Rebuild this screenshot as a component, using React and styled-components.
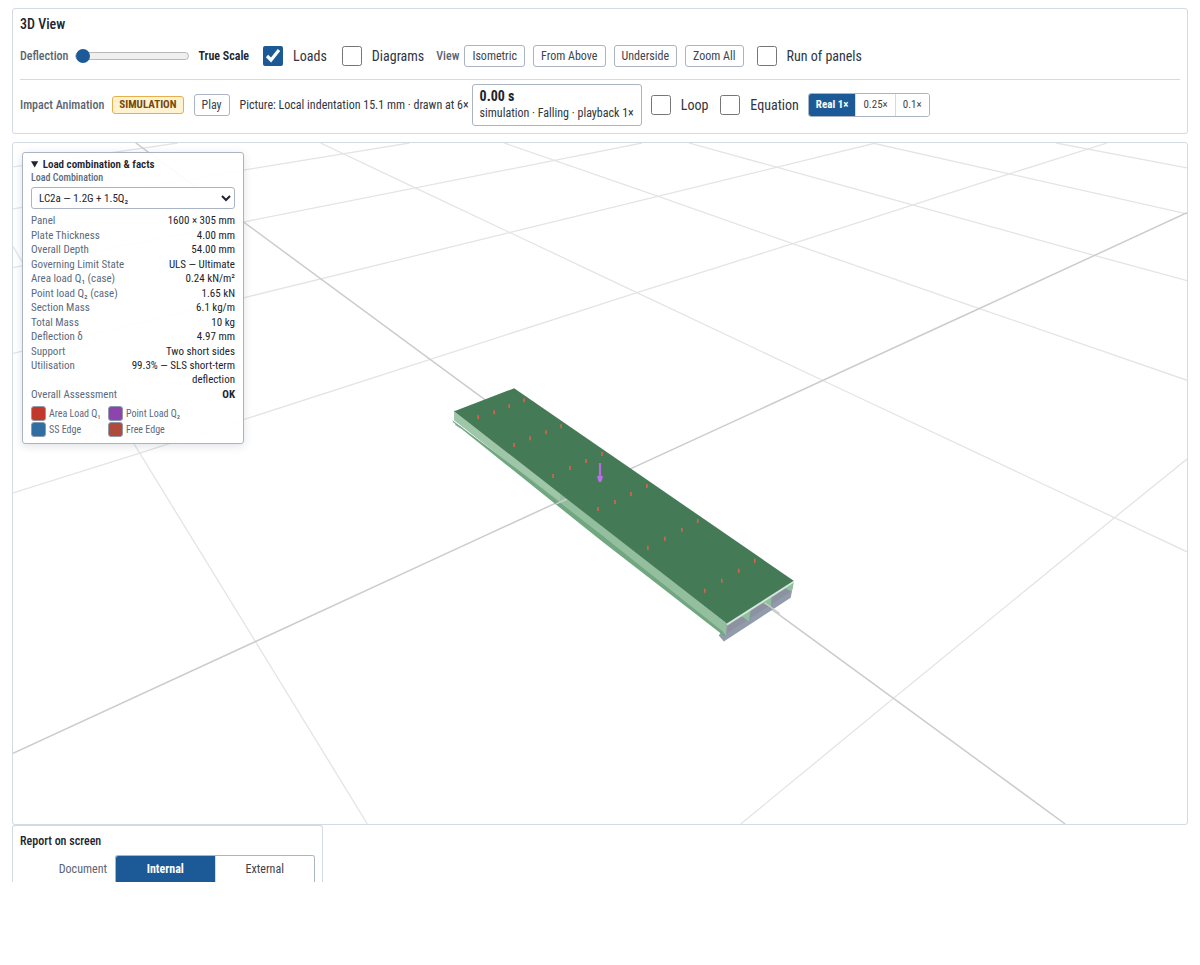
import { useState } from "react";
import styled, { createGlobalStyle } from "styled-components";

const GlobalStyle = createGlobalStyle`
  * {
    box-sizing: border-box;
  }
  body {
    margin: 0;
    background: #fff;
    color: #20242e;
    font-family: "Roboto Condensed", "Liberation Sans Narrow", Roboto, sans-serif;
    font-size: 12px;
    line-height: 16px;
  }
  button, select, input {
    font: inherit;
    color: inherit;
    margin: 0;
  }
`;

const Page = styled.main`
  padding: 8px 12px;
`;

const Card = styled.section`
  border: 1px solid #d3dae3;
  border-radius: 3px;
  background: #fff;
  padding: 7px;
`;

const Toolbar = styled(Card)`
  margin-bottom: 8px;
  padding-bottom: 4px;
`;

const Title = styled.h2`
  margin: 0;
  font-size: 14px;
  line-height: 16px;
  font-weight: 500;
`;

const Row = styled.div`
  display: flex;
  align-items: center;
  min-height: 47px;
`;

const AnimationRow = styled(Row)`
  border-top: 1px solid #d3dae3;
  min-height: 50px;
`;

const Label = styled.label`
  flex: none;
  font-weight: 500;
  color: #5b6472;
  white-space: nowrap;
  margin-right: ${(props) => props.$gap || 8}px;
`;

const Slider = styled.input`
  appearance: none;
  width: 114px;
  height: 16px;
  background: none;
  &::-webkit-slider-runnable-track {
    height: 8px;
    border: 1px solid #b9b9b9;
    border-radius: 4px;
    background: #efefef;
  }
  &::-webkit-slider-thumb {
    appearance: none;
    width: 14px;
    height: 14px;
    margin-top: -4px;
    border-radius: 50%;
    background: #1b5a96;
  }
`;

const ScaleValue = styled.output`
  margin: 0 14px 0 9px;
  font-weight: 600;
  white-space: nowrap;
`;

const Check = styled.label`
  display: flex;
  align-items: center;
  gap: 10px;
  font-size: 14px;
  color: #2f3541;
  white-space: nowrap;
  margin-right: ${(props) => props.$gap || 12}px;
  input {
    width: 20px;
    height: 20px;
    accent-color: #1b5a96;
  }
`;

const Buttons = styled.div`
  display: flex;
  gap: 8px;
  margin-right: 13px;
`;

const Button = styled.button`
  height: 22px;
  padding: 0 7px;
  border: 1px solid #aab4c2;
  border-radius: 3px;
  background: #fff;
  color: #3d4450;
  white-space: nowrap;
`;

const Badge = styled.span`
  padding: 0 6px;
  border: 1px solid #e5b04b;
  border-radius: 3px;
  background: #fff2d0;
  color: #74490c;
  font-size: 11px;
  font-weight: 700;
  margin-right: 10px;
`;

const Note = styled.span`
  margin: 0 3px 0 10px;
  color: #2f3541;
  white-space: nowrap;
`;

const Readout = styled.output`
  display: flex;
  flex-direction: column;
  padding: 3px 7px;
  border: 1px solid #aab4c2;
  border-radius: 3px;
  line-height: 17px;
  color: #2f3541;
  white-space: nowrap;
  margin-right: 9px;
  strong {
    font-size: 14px;
    font-weight: 700;
    color: #20242e;
  }
`;

const Segmented = styled.div`
  display: flex;
  height: 24px;
  border: 1px solid #aab4c2;
  border-radius: 3px;
  overflow: hidden;
`;

const Segment = styled.button`
  border: 0;
  border-left: 1px solid #d3dae3;
  padding: 0 7px;
  font-size: 11px;
  background: ${(props) => (props.$active ? "#1b5a96" : "#fff")};
  color: ${(props) => (props.$active ? "#fff" : "#3d4450")};
  font-weight: ${(props) => (props.$active ? 700 : 400)};
  &:first-child {
    border-left: 0;
  }
`;

const Viewport = styled.section`
  position: relative;
  aspect-ratio: 1176 / 683;
  border: 1px solid #d3dae3;
  border-radius: 3px;
  overflow: hidden;
`;

const Canvas = styled.svg`
  display: block;
  width: 100%;
  height: 100%;
`;

const Facts = styled.details`
  position: absolute;
  top: 9px;
  left: 9px;
  width: 222px;
  padding: 5px 8px 6px;
  border: 1px solid #aab4c2;
  border-radius: 3px;
  background: rgba(255, 255, 255, 0.92);
  box-shadow: 0 2px 8px rgba(20, 40, 70, 0.14);
  font-size: 11px;
  line-height: 14px;
  summary {
    font-weight: 600;
    line-height: 13px;
  }
`;

const FieldLabel = styled.label`
  display: block;
  font-size: 10px;
  line-height: 13px;
  font-weight: 500;
  color: #5b6b7e;
`;

const Select = styled.select`
  display: block;
  width: 100%;
  height: 22px;
  margin: 3px 0 5px;
  padding: 0 3px;
  border: 1px solid #aab4c2;
  border-radius: 3px;
  background: #fff;
`;

const FactList = styled.dl`
  display: flex;
  flex-direction: column;
  justify-content: space-between;
  min-height: 188px;
  margin: 0 0 4px;
`;

const Fact = styled.div`
  display: flex;
  justify-content: space-between;
  dt {
    flex: none;
    color: #5b6b7e;
  }
  dd {
    margin: 0;
    max-width: 110px;
    text-align: right;
    font-weight: ${(props) => (props.$strong ? 700 : 400)};
  }
`;

const Legend = styled.ul`
  display: grid;
  grid-template-columns: 77px 1fr;
  row-gap: 1px;
  margin: 0;
  padding: 0;
  list-style: none;
  font-size: 10px;
  color: #5b6b7e;
`;

const LegendItem = styled.li`
  display: flex;
  align-items: center;
  gap: 3px;
  white-space: nowrap;
  &::before {
    content: "";
    width: 13px;
    height: 13px;
    border: 1px solid #8f9bab;
    border-radius: 3px;
    background: ${(props) => props.$color};
  }
`;

const Report = styled(Card)`
  max-width: 311px;
  border-bottom: 0;
  border-radius: 3px 3px 0 0;
  padding-bottom: 0;
`;

const ReportTitle = styled.h3`
  margin: 0 0 6px;
  font-size: 12px;
  line-height: 16px;
  font-weight: 500;
`;

const ReportRow = styled.div`
  display: grid;
  grid-template-columns: 87px 1fr;
  column-gap: 8px;
  align-items: center;
  text-align: right;
  color: #5b6472;
`;

const Tabs = styled(Segmented)`
  height: 27px;
  border-bottom: 0;
  border-radius: 3px 3px 0 0;
  button {
    flex: 1;
    font-size: 12px;
  }
`;

const gridLines = [
  "M12 246L367 825",
  "M320 142L415 187L637 292L844 390L1188 552",
  "M504 142L657 195L793 243L980 308L1188 380",
  "M689 142L776 166L913 204L1096 255L1188 280",
  "M873 142L1010 173L1188 213",
  "M1057 142L1188 167",
  "M12 166L177 142",
  "M12 208L244 169L409 142",
  "M12 267L244 221L642 142",
  "M12 353L244 297L509 232L876 142",
  "M12 493L139 453L430 359L637 292L793 243L1010 173L1108 142",
  "M741 825L894 699L1115 518L1188 459",
];

const axes = ["M135 142L244 222L472 390L894 699L1066 825", "M12 754L255 642L480 538L980 308L1188 212"];

const areaLoads = [
  [478, 417], [494, 412], [509, 406], [524, 400],
  [514, 445], [530, 438], [546, 432], [561, 426],
  [553, 476], [570, 468], [586, 461], [602, 454],
  [598, 509], [615, 502], [631, 494], [647, 486],
  [648, 548], [665, 539], [682, 530], [698, 521],
  [705, 591], [722, 581], [739, 571], [755, 561],
];

const facts = [
  ["Panel", "1600 × 305 mm"],
  ["Plate Thickness", "4.00 mm"],
  ["Overall Depth", "54.00 mm"],
  ["Governing Limit State", "ULS — Ultimate"],
  ["Area load Q₁ (case)", "0.24 kN/m²"],
  ["Point load Q₂ (case)", "1.65 kN"],
  ["Section Mass", "6.1 kg/m"],
  ["Total Mass", "10 kg"],
  ["Deflection δ", "4.97 mm"],
  ["Support", "Two short sides"],
  ["Utilisation", "99.3% — SLS short-term deflection"],
  ["Overall Assessment", "OK"],
];

const legend = [
  ["Area Load Q₁", "#c0392b"],
  ["Point Load Q₂", "#8e44ad"],
  ["SS Edge", "#2e6ea3"],
  ["Free Edge", "#b04a3a"],
];

const Scene = () => (
  <Canvas viewBox="12 142 1176 683" preserveAspectRatio="none" fill="none" aria-label="3D panel">
    {gridLines.map((d) => (
      <path key={d} d={d} stroke="#e4e4e4" strokeWidth="1.3" />
    ))}
    {axes.map((d) => (
      <path key={d} d={d} stroke="#cccccc" strokeWidth="1.5" />
    ))}
    {/* supports */}
    <path d="M455 423L463 428L460 428L455 425Z" fill="#a9aebd" />
    <path d="M719 636L727 624L794 583L791 598L724 642Z" fill="#929bac" />
    <path d="M728 626L791 586L791 592L727 634Z" fill="#8c92a0" />
    {/* webs and end edge */}
    <path d="M741 616L751 610L749 622Z" fill="#8fc09b" />
    <path d="M762 603L772 597L771 607L768 606Z" fill="#8fc09b" />
    <path d="M785 588L794 581L792 592Z" fill="#8fc09b" />
    <path d="M727 625L794 582" stroke="#d5e8da" strokeWidth="2" />
    <path d="M765 603L780 614" stroke="#cccccc" strokeWidth="1.3" />
    {/* long side */}
    <path d="M452 420L600 531L726 628L725 637L600 540L453 422Z" fill="#70a680" />
    <path d="M454 410L727 624L726 636L723 632L600 534L454 420Z" fill="#93bf9f" />
    <path d="M454 410L560 493L560 501L454 420Z" fill="#a0c6aa" />
    <path d="M556 504L567 499" stroke="#cccccc" strokeWidth="1.5" />
    {/* top plate */}
    <path d="M454 411L514 388L794 581L727 624Z" fill="#457a56" />
    {areaLoads.map(([x, y]) => (
      <path key={`${x}-${y}`} d={`M${x} ${y - 2}v4`} stroke="#d9644e" strokeWidth="1.6" />
    ))}
    <path d="M600 463V477" stroke="#b968e6" strokeWidth="2.2" />
    <path d="M597 476H603L602 480L601 482H599L598 480Z" fill="#c06cf0" />
  </Canvas>
);

const App = () => {
  const [speed, setSpeed] = useState("Real 1×");
  const [documentType, setDocumentType] = useState("Internal");

  return (
    <>
      <GlobalStyle />
      <Page>
        <Toolbar>
          <Title>3D View</Title>
          <Row>
            <Label htmlFor="deflection" $gap={7}>Deflection</Label>
            <Slider id="deflection" type="range" min="0" max="100" defaultValue="0" />
            <ScaleValue htmlFor="deflection">True Scale</ScaleValue>
            <Check $gap={15}>
              <input type="checkbox" defaultChecked />
              Loads
            </Check>
            <Check>
              <input type="checkbox" />
              Diagrams
            </Check>
            <Label as="span" $gap={5}>View</Label>
            <Buttons>
              {["Isometric", "From Above", "Underside", "Zoom All"].map((name) => (
                <Button key={name} type="button">{name}</Button>
              ))}
            </Buttons>
            <Check>
              <input type="checkbox" />
              Run of panels
            </Check>
          </Row>
          <AnimationRow>
            <Label as="span">Impact Animation</Label>
            <Badge>SIMULATION</Badge>
            <Button type="button">Play</Button>
            <Note>Picture: Local indentation 15.1 mm · drawn at 6×</Note>
            <Readout>
              <strong>0.00 s</strong>
              <span>simulation · Falling · playback 1×</span>
            </Readout>
            <Check>
              <input type="checkbox" />
              Loop
            </Check>
            <Check $gap={9}>
              <input type="checkbox" />
              Equation
            </Check>
            <Segmented>
              {["Real 1×", "0.25×", "0.1×"].map((name) => (
                <Segment key={name} type="button" $active={speed === name} onClick={() => setSpeed(name)}>
                  {name}
                </Segment>
              ))}
            </Segmented>
          </AnimationRow>
        </Toolbar>

        <Viewport>
          <Scene />
          <Facts open>
            <summary>Load combination &amp; facts</summary>
            <FieldLabel htmlFor="combination">Load Combination</FieldLabel>
            <Select id="combination">
              <option>LC2a — 1.2G + 1.5Q₂</option>
            </Select>
            <FactList>
              {facts.map(([name, value]) => (
                <Fact key={name} $strong={value === "OK"}>
                  <dt>{name}</dt>
                  <dd>{value}</dd>
                </Fact>
              ))}
            </FactList>
            <Legend>
              {legend.map(([name, color]) => (
                <LegendItem key={name} $color={color}>{name}</LegendItem>
              ))}
            </Legend>
          </Facts>
        </Viewport>

        <Report>
          <ReportTitle>Report on screen</ReportTitle>
          <ReportRow>
            <span>Document</span>
            <Tabs>
              {["Internal", "External"].map((name) => (
                <Segment
                  key={name}
                  type="button"
                  $active={documentType === name}
                  onClick={() => setDocumentType(name)}
                >
                  {name}
                </Segment>
              ))}
            </Tabs>
          </ReportRow>
        </Report>
      </Page>
    </>
  );
};

export default App;
